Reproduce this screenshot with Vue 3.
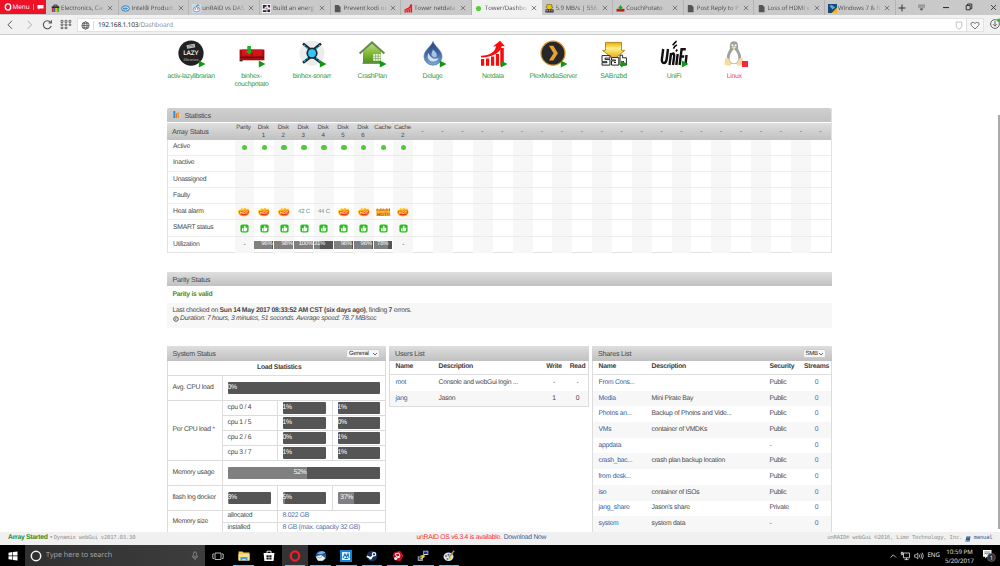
<script setup>
const tabs = [
  { icon: 'bag', text: 'Electronics, Car' },
  { icon: 'intel', text: 'Intel® Product' },
  { icon: 'reddit', text: 'unRAID vs DAS' },
  { icon: 'maze', text: 'Build an energ' },
  { icon: 'doc', text: 'Prevent kodi on' },
  { icon: 'bars', text: 'Tower netdata' },
  { icon: 'dot', text: 'Tower/Dashbo', active: true },
  { icon: 'sab', text: '5.9 MB/s | 556' },
  { icon: 'couch', text: 'CouchPotato' },
  { icon: 'doc', text: 'Post Reply to P' },
  { icon: 'doc', text: 'Loss of HDMI v' },
  { icon: 'win', text: 'Windows 7 & h' },
]

const apps = [
  { id: 'lazy', lines: ['activ-lazylibrarian'] },
  { id: 'couch', lines: ['binhex-', 'couchpotato'] },
  { id: 'sonarr', lines: ['binhex-sonarr'] },
  { id: 'crash', lines: ['CrashPlan'] },
  { id: 'deluge', lines: ['Deluge'] },
  { id: 'netdata', lines: ['Netdata'] },
  { id: 'plex', lines: ['PlexMediaServer'] },
  { id: 'sab', lines: ['SABnzbd'] },
  { id: 'unifi', lines: ['UniFi'] },
  { id: 'linux', lines: ['Linux'], stopped: true },
]

const disks = ['Parity', 'Disk\n1', 'Disk\n2', 'Disk\n3', 'Disk\n4', 'Disk\n5', 'Disk\n6', 'Cache', 'Cache\n2']
const rows = ['Active', 'Inactive', 'Unassigned', 'Faulty', 'Heat alarm', 'SMART status', 'Utilization']
const heat = ['hot', 'hot', 'hot', '42 C', '44 C', 'hot', 'hot', 'max', 'hot']
const usage = [null, 96, 98, 100, 31, 96, 96, 78, null]

const cpus = [
  ['cpu 0 / 4', 1, 1],
  ['cpu 1 / 5', 1, 0],
  ['cpu 2 / 6', 0, 1],
  ['cpu 3 / 7', 1, 1],
]

const users = [
  ['root', 'Console and webGui login ...', '-', '-'],
  ['jang', 'Jason', '1', '0'],
]

const shares = [
  ['From Cons...', '', 'Public'],
  ['Media', 'Mini Pirate Bay', 'Public'],
  ['Photos an...', 'Backup of Photos and Vide...', 'Public'],
  ['VMs', 'container of VMDKs', 'Public'],
  ['appdata', '', '-'],
  ['crash_bac...', 'crash plan backup location', 'Public'],
  ['from desk...', '', 'Public'],
  ['iso', 'container of ISOs', 'Public'],
  ['jang_share', "Jason's share", 'Private'],
  ['system', 'system data', '-'],
]

const tasks = ['view', 'folder', 'store', 'opera', 'bird', 'control', 'steam', 'red', 'putty', 'paint']
</script>

<template>
  <div class="screen">
    <header class="tabstrip">
      <div class="menu">
        <svg class="menu-o" viewBox="0 0 8 8"><ellipse cx="4" cy="4" rx="2.7" ry="3.1" fill="none" stroke="#fff" stroke-width="1.4" /></svg>
        <span>Menu</span><i></i>
        <svg class="menu-flag" viewBox="0 0 7 7"><path d="M.5 1h6v3.6H2.6L1.6 6V4.6H.5z" fill="#fff" /></svg>
      </div>
      <div v-for="(t, i) in tabs" :key="i" class="tab" :class="{ active: t.active }">
        <svg class="fav" viewBox="0 0 10 10">
          <g v-if="t.icon === 'bag'">
            <path d="M3.2 3V1.2h3.6V3" fill="none" stroke="#222" /><path d="M.8 2.6h8.4v2H.8z" fill="#222" />
            <path d="M1 4.3h2v4.5H1z" fill="#d22" /><path d="M3 4.3h2v4.5H3z" fill="#26c" /><path d="M5 4.3h2v4.5H5z" fill="#eb0" /><path d="M7 4.3h2v4.5H7z" fill="#3a3" />
          </g>
          <g v-else-if="t.icon === 'intel'">
            <ellipse cx="5" cy="5" rx="4.4" ry="3" fill="#cfe3f3" stroke="#2b7fc4" stroke-width="1.1" /><path d="M2 5.2h5.6M3.4 3.8v2.4M5.6 3.6v2.8" stroke="#2b7fc4" stroke-width="1" />
          </g>
          <g v-else-if="t.icon === 'reddit'">
            <path d="M0 0h10v10H0z" fill="#c5dcf0" /><ellipse cx="5" cy="6" rx="3.6" ry="2.7" fill="#fff" stroke="#667" stroke-width=".7" />
            <circle cx="3.6" cy="5.5" r=".9" fill="#e43" /><circle cx="6.4" cy="5.5" r=".9" fill="#e43" /><path d="M5 3.2 6 1l2 .5" fill="none" stroke="#345" stroke-width=".7" />
          </g>
          <g v-else-if="t.icon === 'maze'">
            <path d="M0 0h10v10H0z" fill="#f2f2f2" /><path d="M1 1h4v2H3v2H1zM6 1h3v3H7.500zM1 7h4v2H1zM6 6h3v3H6z" fill="#3a2036" /><path d="M4 4h2v2H4z" fill="#a7a" />
          </g>
          <path v-else-if="t.icon === 'doc'" d="M2 1h4l2.4 2.3V9.3H2z" fill="#555" />
          <path v-else-if="t.icon === 'bars'" d="M.5 7h1.6v2.4H.5zM2.7 6h1.6v3.4H2.7zM4.9 5h1.6v4.4H4.9zM7.2 3h1.8v6.4H7.2zM.5 5.8C4 5 6 4 6.8 1.8L6 1.2 9 .4v2.7L8 2.5C6.5 5 4 6 .5 6.5z" fill="#f00c14" />
          <circle v-else-if="t.icon === 'dot'" cx="5" cy="5" r="2.9" fill="#4cd530" />
          <g v-else-if="t.icon === 'sab'">
            <path d="M2 .6h5.6v3h1.4L5 7 1 3.6h1z" fill="#f5c400" stroke="#6b5300" stroke-width=".6" /><path d="M.5 6h9v3.4h-9z" fill="#222" /><path d="M1.4 7.6h1.8M4.2 7.6H6M7 7.6h1.5" stroke="#eee" stroke-width="1" />
          </g>
          <g v-else-if="t.icon === 'couch'">
            <path d="M.6 5.4h8.8v3H.6z" fill="#c4161c" /><path d="M2.2 4.6 5 1l2.8 3.6H6.2v2H3.8v-2z" fill="#17a81b" />
          </g>
          <g v-else>
            <path d="M0 0h10v10H0z" fill="#164a78" /><path d="M1.5 2 4 1l4 3-3 2z" fill="#6aa5cf" /><path d="M4 10 10 4v6z" fill="#e8b52c" />
          </g>
        </svg>
        <span class="tab-text">{{ t.text }}</span>
        <svg class="x" viewBox="0 0 6 6"><path d="M.8.8l4.4 4.4M5.2.8.8 5.2" stroke="#666" stroke-width=".8" /></svg>
      </div>
      <svg class="winctl" viewBox="0 0 104 15" width="104" height="15">
        <path d="M6 4.6v6.8M2.6 8h6.8" stroke="#333" stroke-width="1" />
        <path d="M22 5.2h7M22 7h7M24 8.8h3l-1.5 1.6z" stroke="#666" stroke-width=".8" fill="#666" />
        <path d="M47 7.6h6" stroke="#222" stroke-width="1" />
        <path d="M70.2 5.4h4v4.400h-4zM71.600 5.200V4h4.200v4.600h-1.400" fill="none" stroke="#222" stroke-width=".9" />
        <path d="M95 5l5 5M100 5l-5 5" stroke="#222" stroke-width=".8" />
      </svg>
    </header>

    <div class="toolbar">
      <svg class="nav" viewBox="0 0 77 19" width="77" height="19">
        <path d="M12 5.800 8 9.800l4 4" fill="none" stroke="#555" stroke-width="1" />
        <path d="M27.600 5.800l4 4-4 4" fill="none" stroke="#aaa" stroke-width="1" />
        <path d="M50.600 7.400a4 4 0 1 0 .6 3.400M51.400 5.200v2.800h-2.800" fill="none" stroke="#555" stroke-width="1.100" />
        <g fill="none" stroke="#555" stroke-width=".8"><path d="M61 5.400h2v2h-2zM65 5.400h2v2h-2zM69 5.400h1.800v2H69zM61 9h2v1.400h-2zM65 9h2v1.400h-2zM69 9h1.800v1.400H69zM61 12.200h2v1.400h-2zM65 12.200h2v1.400h-2z" /></g>
      </svg>
      <div class="address">
        <svg viewBox="0 0 9 9" width="9" height="9"><g fill="none" stroke="#555" stroke-width=".8"><circle cx="4.500" cy="4.500" r="3.600" /><ellipse cx="4.500" cy="4.500" rx="1.600" ry="3.600" /><path d="M1 4.500h7M1.500 2.700h6M1.500 6.300h6" /></g></svg>
        <i></i>
        <span class="url"><b>192.168.1.103</b>/Dashboard</span>
        <svg class="shield" viewBox="0 0 8 9" width="8" height="9"><path d="M1.200 1h5.600v4.200Q6.800 7 4 8.200 1.200 7 1.200 5.200z" fill="none" stroke="#bbb" stroke-width=".9" /></svg>
        <div class="heart"><svg viewBox="0 0 10 9" width="10" height="9"><path d="M5 8 1.400 4.400Q.4 3 1.400 1.800 3.200.4 5 2.400 6.800.4 8.600 1.800q1 1.200 0 2.600z" fill="none" stroke="#666" stroke-width=".9" /></svg></div>
      </div>
      <svg class="dl" viewBox="0 0 12 12" width="12" height="12"><circle cx="6" cy="6" r="4.400" fill="none" stroke="#555" stroke-width=".9" /><path d="M6 3v5M4 6.200l2 2 2-2" fill="none" stroke="#555" stroke-width=".9" /><circle cx="9.800" cy="2.200" r="1.800" fill="#25c12c" /></svg>
    </div>

    <main class="page">
      <section class="apps">
        <div v-for="a in apps" :key="a.id" class="app" :class="{ stopped: a.stopped }">
          <svg class="app-icon" viewBox="0 0 28 27">
            <g v-if="a.id === 'lazy'">
              <circle cx="14" cy="13.200" r="12.600" fill="#202124" /><path d="M9.500 5.200l8-1.400.8 3.400-8 1.600z" fill="#d9d3c2" /><path d="M10.400 6l6.600-1M10.600 7.300l6.600-1" stroke="#444" stroke-width=".5" />
              <text x="14" y="15.400" text-anchor="middle" font-size="6.200" font-weight="bold" fill="#f2eee2" font-family="Lato">LAZY</text>
              <text x="14" y="20.600" text-anchor="middle" font-size="4.200" font-style="italic" fill="#c9c4b8" font-family="Liberation Serif">librarian</text>
            </g>
            <g v-else-if="a.id === 'couch'">
              <path d="M1.600 9.500h24.800v10.800H1.600z" fill="#a80f12" /><path d="M4 9.600h20v6.200H4z" fill="#d21519" /><path d="M2 17.400h24" stroke="#6e080a" stroke-width="1.200" /><path d="M14 10v6" stroke="#7c090c" stroke-width=".7" /><path d="M1.600 20h3v1.400h-3z" fill="#333" />
              <path d="M9.300 6h3.600v5h2.200l-4 3.600-4-3.600h2.200z" fill="#13b322" />
            </g>
            <g v-else-if="a.id === 'sonarr'">
              <circle cx="14" cy="13.200" r="12.500" fill="#ececec" /><path d="M5 3.600 13 10h2l8-6.400M5 22.800 13 16.600h2l8 6.200" fill="none" stroke="#1d2a33" stroke-width="2.600" />
              <path d="M6 5l4.500 4.500M22 5l-4.500 4.500M6 21.500l4.500-4.500M22 21.500 17.500 17" stroke="#32b8ea" stroke-width="1.200" stroke-dasharray="2 1.500" />
              <circle cx="14" cy="13.200" r="5.600" fill="#1d2a33" /><circle cx="14" cy="13.200" r="3.900" fill="#35c5f4" />
            </g>
            <g v-else-if="a.id === 'crash'">
              <defs><linearGradient id="house" x2="0" y2="1"><stop offset="0" stop-color="#b9dc84" /><stop offset=".55" stop-color="#7cb52f" /><stop offset="1" stop-color="#4d8f20" /></linearGradient></defs>
              <path d="M5 11.500 14 3.500l9 8v11.700H5z" fill="url(#house)" /><path d="M1.600 13.400 14 2.400l12.400 11" fill="none" stroke="#628f4a" stroke-width="2" /><path d="M4.500 23.300h19.500" stroke="#7c8877" stroke-width="1.200" />
              <path d="M15.200 14h7.400v6.800h-7.400z" fill="#eef6e4" /><path d="M17.600 14v6.800M20.200 14v6.800M15.200 16.200h7.400M15.200 18.500h7.400" stroke="#79a85a" stroke-width=".7" />
            </g>
            <g v-else-if="a.id === 'deluge'">
              <defs><linearGradient id="drop" x2="0" y2="1"><stop offset="0" stop-color="#2d4470" /><stop offset=".5" stop-color="#3f68a4" /><stop offset="1" stop-color="#7fa9d4" /></linearGradient></defs>
              <path d="M14 1.500C15.500 6 23 10.500 23 16.600a9 8.600 0 0 1-18 0C5 10.500 12.500 6 14 1.500z" fill="url(#drop)" stroke="#5a76a4" stroke-width=".7" />
              <path d="M9.500 13c-2 4 0 8.500 4.500 8.500 3 0 5-1.500 5.500-3.500-4 2-8.500 0-10-5z" fill="#d3e2f2" /><path d="M14 9.500c3 3 4.500 4.500 3.500 7-1.500 1.500-4.500.5-5-2 0-2 1-3 1.500-5z" fill="#a9c4e2" />
            </g>
            <path v-else-if="a.id === 'netdata'" d="M2 19h3.200v6.800H2zM7 18.500h3.200v7.300H7zM12 16.500h3.200v9.300H12zM16.900 14h3.100v11.800h-3.100zM21.300 8h3.500v17.800h-3.500zM2 15.800C11 15.500 16 12 17 6.200l-3 .3L21 .8l5 5.500-3.200-.2C21 13 14 17.400 2 17.500z" fill="#f80c0c" />
            <g v-else-if="a.id === 'plex'">
              <circle cx="14" cy="13.200" r="12" fill="#26282b" stroke="#d79524" stroke-width="1.200" /><path d="M10 5.800h4.300l4.600 7.400-4.600 7.400H10l4.500-7.400z" fill="#e8a22c" />
            </g>
            <g v-else-if="a.id === 'sab'">
              <defs><linearGradient id="arrow" x2="0" y2="1"><stop offset="0" stop-color="#e9a900" /><stop offset=".35" stop-color="#fff08a" /><stop offset="1" stop-color="#e0a000" /></linearGradient></defs>
              <path d="M5.500 2.400h16v8h3.200L14 19.500 2.600 10.400h2.900z" fill="url(#arrow)" stroke="#a57600" stroke-width=".8" />
              <path d="M2 15.600h8v2.500H5v1.500h5v5.500H2v-2.400h5v-1H2zM11.500 17.600h7.300v7.500h-7.300v-4.200h4v-.9h-4zM20 15.200h2.600v2.600h3.800v7.300H20z" fill="#fff" stroke="#252525" stroke-width="1" /><path d="M14 22.500h2M22.400 21.500h1.600" stroke="#252525" stroke-width="1" />
            </g>
            <g v-else-if="a.id === 'unifi'" fill="none" stroke="#111" stroke-width="2.400">
              <path d="M3.200 9 1.900 19q-.3 4 2 4 2.300 0 2.800-4L8 9M9.500 25l1.600-12M10.900 15q3.500-3.500 3.300 1L13 25M16.300 25l1.400-11M19.600 25l2-15.800h4.200M20.800 16.500h3.400M25.500 25l1-10" /><path d="M12.700 5.300q3-4 4-4M13.400 8.600q1.500-3 3.600-3.600M16 11.500l1.200-2" stroke-width="1.700" />
            </g>
            <g v-else opacity=".5">
              <path d="M14 1.200c-4 0-4.400 3.500-4 7-1 3-3.600 6-3 11 .5 3 4 4.800 7 4.800s6.500-1.800 7-4.800c.6-5-2-8-3-11 .4-3.500 0-7-4-7z" fill="#444" /><path d="M14 9c-2.700 2.200-4.400 6-4.400 9.500s2.400 5 4.400 5 4.400-1.500 4.400-5S16.700 11.200 14 9z" fill="#fff" />
              <path d="M11.500 7.300 14 6.200l2.500 1.100L14 9.300zM5 18.500l3-.5 3.500 6-1.500 2-5.500-1.300zM23 18.500l-3-.5-3.500 6 1.500 2 5.500-1.300z" fill="#f1ba3e" /><circle cx="12.400" cy="5.300" r="1" fill="#fff" /><circle cx="15.600" cy="5.300" r="1" fill="#fff" />
            </g>
          </svg>
          <svg class="state" viewBox="0 0 8 8"><rect v-if="a.stopped" x="1" y="1" width="6" height="6" fill="#f5273e" /><path v-else d="M.8.6 7.500 4 .8 7.400z" fill="#0c9a10" /></svg>
          <span v-for="l in a.lines" :key="l">{{ l }}</span>
        </div>
      </section>

      <section class="stats">
        <h2 class="flat"><svg viewBox="0 0 8 9" width="8" height="9"><path d="M.4 1h1.900v7H.4z" fill="#1f8fe0" /><path d="M2.900 3h1.400v5H2.900z" fill="#f4762a" /><path d="M4.600 2h1.300l.6 6H5z" fill="#f79a2e" /><path d="M6.500 4h1.200v4H6.500z" fill="#cfd8de" /></svg>Statistics</h2>
        <div class="srow shead">
          <div class="lab">Array Status</div>
          <div v-for="n in 30" :key="n" class="cell" :class="{ none: n > 9 }">{{ disks[n - 1] || '-' }}</div>
        </div>
        <div v-for="(r, ri) in rows" :key="r" class="srow">
          <div class="lab">{{ r }}</div>
          <div v-for="n in 30" :key="n" class="cell">
            <template v-if="n < 10">
              <i v-if="ri === 0" class="led"></i>
              <template v-else-if="ri === 4">
                <svg v-if="heat[n - 1] === 'hot'" viewBox="0 0 12 10" width="12" height="10"><path d="M.5 3l2-.6 1-1.300 1.700.8L7 .8l1.500 1.100 2-.3.400 1.600.9 1.800-1 1.500-1 2-4 1.100-3.500-.8-1.500-1.800L0 5.500z" fill="#ffc413" /><path d="M1 4l10-.5-.5 3.500q-4.500 3-9 0z" fill="#ee3a0c" /><text x="6" y="7.100" text-anchor="middle" font-size="4" font-weight="bold" fill="#fff3a8">HOT</text></svg>
                <svg v-else-if="heat[n - 1] === 'max'" viewBox="0 0 15 10" width="15" height="10"><path d="M.3 3.500 1 .8l2 1.700L4.500 1 6 2.600 7.300 1l1.500 1.500 1.500-1.600 1.400 1.500 2-1.300.8 8H.3z" fill="#f8b73c" /><path d="M1 2v2M3 2.500v1.500M5 1.500V4M7 2v2M9 2.500V4M11 1.500V4M13.400 1.500V4" stroke="#c14618" stroke-width=".8" /><text x="7.400" y="8.700" text-anchor="middle" font-size="4.600" font-weight="bold" fill="#b55010">HOT!!</text></svg>
                <span v-else class="temp">{{ heat[n - 1] }}</span>
              </template>
              <svg v-else-if="ri === 5" viewBox="0 0 9 9" width="9" height="9"><rect x=".4" y=".4" width="8.200" height="8.200" rx="1.800" fill="#2cc01f" /><path d="M2 4.200h1.200v3H2zM3.600 4.200 4.700 1.600q1 0 .7 2.200h1.800q.3 2-.7 3.400H3.600z" fill="#fff" /></svg>
              <template v-else-if="ri === 6">
                <div v-if="usage[n - 1] !== null" class="meter mini" :style="{ '--p': usage[n - 1] + '%' }"><span>{{ usage[n - 1] }}%</span></div>
                <template v-else>-</template>
              </template>
            </template>
          </div>
        </div>
      </section>

      <section class="parity">
        <h2>Parity Status</h2>
        <p class="valid">Parity is valid</p>
        <div class="checked">
          <p>Last checked on <b>Sun 14 May 2017 08:33:52 AM CST (six days ago)</b>, finding <b>7</b> errors.</p>
          <p><svg viewBox="0 0 6 6" width="6" height="6"><circle cx="3" cy="3" r="2.300" fill="none" stroke="#333" stroke-width=".8" /><path d="M3 1.500V3.300H2" fill="none" stroke="#333" stroke-width=".5" /></svg><em> Duration: 7 hours, 3 minutes, 51 seconds. Average speed: 78.7 MB/sec</em></p>
        </div>
      </section>

      <section class="panels">
        <div class="panel system">
          <h2>System Status<span class="select gen">General<svg viewBox="0 0 6 4" width="6" height="4"><path d="M1 1l2 2 2-2" fill="none" stroke="#444" stroke-width=".8" /></svg></span></h2>
          <div class="sgrid">
            <div class="load-title">Load Statistics</div>
            <div class="g">Avg. CPU load</div><div class="g w3"><div class="meter" :style="{ '--p': '0%' }"><span>0%</span></div></div>
            <div class="g percpu">Per CPU load&nbsp;<em>*</em></div>
            <template v-for="c in cpus" :key="c[0]">
              <div class="g">{{ c[0] }}</div>
              <div v-for="k in 2" :key="k" class="g"><div class="meter" :style="{ '--p': c[k] + '%' }"><span>{{ c[k] }}%</span></div></div>
            </template>
            <div class="g">Memory usage</div><div class="g w3"><div class="meter" :style="{ '--p': '52%' }"><span>52%</span></div></div>
            <div class="g">flash log docker</div>
            <div v-for="p in [3, 5, 37]" :key="p" class="g"><div class="meter" :style="{ '--p': p + '%' }"><span>{{ p }}%</span></div></div>
            <div class="g memsize">Memory size</div>
            <div class="g">allocated</div><div class="g w2 blue">8.022 GB</div>
            <div class="g">installed</div><div class="g w2 blue">8 GB (max. capacity 32 GB)</div>
          </div>
        </div>

        <div class="panel users">
          <h2>Users List</h2>
          <div class="trow thead"><b>Name</b><b>Description</b><b class="c">Write</b><b class="c">Read</b></div>
          <div v-for="u in users" :key="u[0]" class="trow"><a>{{ u[0] }}</a><span>{{ u[1] }}</span><span class="c">{{ u[2] }}</span><span class="c">{{ u[3] }}</span></div>
        </div>

        <div class="panel shares">
          <h2>Shares List<span class="select">SMB<svg viewBox="0 0 6 4" width="6" height="4"><path d="M1 1l2 2 2-2" fill="none" stroke="#444" stroke-width=".8" /></svg></span></h2>
          <div class="trow thead"><b>Name</b><b>Description</b><b>Security</b><b class="c">Streams</b></div>
          <div v-for="s in shares" :key="s[0]" class="trow"><a>{{ s[0] }}</a><span>{{ s[1] }}</span><span>{{ s[2] }}</span><span class="c num">0</span></div>
        </div>
      </section>
      <i class="scroll"></i>
    </main>

    <footer class="status">
      <div class="left"><b>Array Started</b><span class="mono">•<s></s>Dynamix webGui v2017.03.30</span></div>
      <div class="mid"><span>unRAID OS v6.3.4 is available.</span><a>Download Now</a></div>
      <div class="right mono">unRAID® webGui ©2016, Lime Technology, Inc.<svg viewBox="0 0 6 6" width="6" height="6"><path d="M1.500.5h4L4.600 5.400H.4z" fill="#22598f" /><path d="M2.200 1.900h2.200M.8 4.500h3.500" stroke="#fff" stroke-width=".4" /></svg><a>manual</a></div>
    </footer>

    <nav class="taskbar">
      <div class="start"><svg viewBox="0 0 10 10" width="10" height="10"><path d="M.5 1.700 4.400 1.100v3.500H.5zM5 1 9.500.4v4.200H5zM.5 5.200h3.900v3.600L.5 8.200zM5 5.200h4.500v4.300L5 8.900z" fill="#fff" /></svg></div>
      <div class="search">
        <svg viewBox="0 0 12 12" width="12" height="12"><circle cx="6" cy="6" r="4.700" fill="none" stroke="#f2f2f2" stroke-width="1.500" /></svg>
        <span>Type here to search</span>
        <svg class="mic" viewBox="0 0 8 10" width="8" height="10"><rect x="2.600" y=".8" width="2.800" height="5.200" rx="1.400" fill="none" stroke="#999" stroke-width=".7" /><path d="M1.300 4.500Q1.300 7.300 4 7.300T6.700 4.500M4 7.300v1.900" fill="none" stroke="#999" stroke-width=".7" /></svg>
      </div>
      <div v-for="k in tasks" :key="k" class="task" :class="[k, { open: k !== 'view' && k !== 'store' }]">
        <svg viewBox="0 0 12 12" width="12" height="12">
          <path v-if="k === 'view'" d="M3 3h6v6.500H3zM2 4H.8v4.500H2M10 4h1.200v4.500H10" fill="none" stroke="#ddd" stroke-width=".8" />
          <g v-else-if="k === 'folder'"><path d="M.5 1.500h4l1 1h6v8H.5z" fill="#f5c84f" /><path d="M.5 4h11v6.500H.5z" fill="#fbe08a" /><path d="M2.500 7h7v3.800H7.600V9H4.400v1.800H2.500z" fill="#3fa3e0" /></g>
          <g v-else-if="k === 'store'"><path d="M4 3V1.200h4V3" fill="none" stroke="#fff" stroke-width=".9" /><path d="M.6 3h10.800l-.8 8H1.400z" fill="#fff" /><path d="M3.500 5.200h2.200v1.900H3.500zM6.300 5.200h2.200v1.900H6.300zM3.500 7.600h2.200v1.900H3.500zM6.300 7.600h2.200v1.900H6.300z" fill="#111" /></g>
          <ellipse v-else-if="k === 'opera'" cx="6" cy="6" rx="4.200" ry="4.700" fill="none" stroke="#f01d2d" stroke-width="2.300" />
          <g v-else-if="k === 'bird'"><circle cx="6" cy="6" r="5.200" fill="#245f9f" /><path d="M2 4q4-4.500 8.500-1.500L7 4z" fill="#6fb2e8" /><path d="M.7 6.500 6 5l4.500 3-3 2.700H3z" fill="#eee" /><path d="M.7 6.500 5 8l2-1.500" stroke="#789" stroke-width=".6" fill="none" /></g>
          <g v-else-if="k === 'control'"><path d="M0 0h12v12H0z" fill="#1583d6" /><path d="M2 2h8v8H2z" fill="#dff0fc" /><path d="M3 8 5 4l1.500 3L8 3.500 9 8M4.500 8.500h3.500" fill="none" stroke="#1477c2" stroke-width="1.100" /></g>
          <g v-else-if="k === 'steam'"><circle cx="6" cy="6" r="5.300" fill="#15315a" /><circle cx="8" cy="4.300" r="1.700" fill="none" stroke="#fff" stroke-width="1.100" /><path d="M.8 6.200 4.500 8 7 5.800" stroke="#fff" stroke-width="1.700" fill="none" /><circle cx="4.500" cy="8.200" r="1.400" fill="#fff" /></g>
          <g v-else-if="k === 'red'"><path d="M2 2.500 8 .8l3.500 5-3 5.400-5.500-.7L.6 6z" fill="#b81425" /><path d="M3 4l4-1 1 3-3 1zM5 8l3-1" stroke="#fff" stroke-width=".9" fill="none" /><circle cx="3.700" cy="8.500" r="1.500" fill="#eee" /></g>
          <g v-else-if="k === 'putty'"><path d="M6.300.8h5v4.300h-5zM.8 6.500h5v4.300h-5z" fill="#c9ccd2" /><path d="M7 1.500h3.600v2.600H7zM1.500 7.200h3.600v2.500H1.500z" fill="#1632b8" /><path d="M8 4.800 4.500 6l2.500.8L3.500 9" fill="none" stroke="#f5dc1e" stroke-width="1.200" /></g>
          <g v-else><ellipse cx="5.500" cy="6.800" rx="5" ry="4.200" fill="#cfe4ef" /><circle cx="3" cy="6" r="1" fill="#d43" /><circle cx="4.500" cy="9" r="1" fill="#3a3" /><circle cx="5.500" cy="4.800" r="1" fill="#36c" /><circle cx="7.500" cy="8.500" r="1" fill="#e9b421" /><path d="M6 7.500 11 .8" stroke="#c98738" stroke-width="1.500" /></g>
        </svg>
      </div>
      <div class="tray">
        <svg viewBox="0 0 36 12" width="36" height="12"><g fill="none" stroke="#e5e5e5" stroke-width=".8"><path d="M1.600 7.500 4.300 4.800 7 7.500" /><path d="M14.500 3h6v4.800h-6zM15.500 9.600h4M17.500 7.800v1.800M13 2.300v3M12.300 2.300h1.700v2H12.300z" /><path d="M25.600 4.800h1.300l1.900-1.700v5.800l-1.900-1.700h-1.300zM30.200 4.500q1 1.500 0 3M31.800 3.500q1.700 2.500 0 5M33.200 2.700q2.300 3.300 0 6.600" stroke-width=".7" /></g></svg>
        <span class="eng">ENG</span>
        <div class="clock"><span>10:59 PM</span><span>5/20/2017</span></div>
        <svg class="note" viewBox="0 0 14 13" width="14" height="13"><path d="M1 1h8.500v6.800H5L3.200 9.500V7.800H1z" fill="#fff" /><path d="M2.300 3h6M2.300 4.700h6" stroke="#333" stroke-width=".6" /><circle cx="9.400" cy="8.500" r="4" fill="#333" stroke="#777" stroke-width=".6" /><text x="9.400" y="10.600" text-anchor="middle" font-size="5.800" fill="#fff" font-family="Open Sans">1</text></svg>
      </div>
    </nav>
  </div>
</template>

<style>
html, body { margin: 0; background: #fff; overflow: hidden; }
</style>

<style scoped>
* { box-sizing: border-box; }
.screen { width: 1000px; height: 566px; display: flex; flex-direction: column; overflow: hidden; background: #fff; color: #4a4a4a; font: 6.8px/1 "Liberation Sans", Arial, sans-serif; letter-spacing: -.27px; text-rendering: geometricPrecision; white-space: nowrap; }
svg { flex: none; display: block; letter-spacing: 0; }
h2, p { margin: 0; }

.tabstrip { flex: none; height: 15px; display: flex; background: #c9c9c9; font-family: "Open Sans", sans-serif; letter-spacing: 0; color: #4b4b4b; }
.menu { width: 46px; height: 14px; margin-right: 2px; background: #ed1226; color: #fff; display: flex; align-items: center; padding-left: 3.500px; font-size: 6.400px; flex: none; }
.menu-o { width: 8px; height: 8px; margin-right: 1px; }
.menu i { width: 1px; height: 6px; background: #f58a93; margin: 0 3px 0 3.500px; }
.menu-flag { width: 7px; height: 7px; }
.tab { width: 70.650px; flex: none; display: flex; align-items: center; padding: 1px 4.500px 0 2.500px; border-right: 1px solid #b4b4b4; font-size: 6.100px; }
.tab.active { background: #f1f1f1; border-color: #f1f1f1; }
.fav { width: 9px; height: 9px; margin-right: 1.500px; }
.tab-text { flex: 1; min-width: 0; line-height: 12px; margin-right: 4px; -webkit-mask-image: linear-gradient(90deg, #000 75%, #0003); mask-image: linear-gradient(90deg, #000 75%, #0003); }
.x { width: 6px; height: 6px; }
.winctl { flex: none; }

.toolbar { flex: none; height: 20px; background: #f1f1f1; border-bottom: 1px solid #ccc; display: flex; align-items: flex-start; font-family: "Open Sans", sans-serif; letter-spacing: 0; }
.address { flex: none; width: 907px; height: 14px; margin-top: 3px; background: #fff; border: 1px solid #e2e2e2; display: flex; align-items: center; padding-left: 3px; }
.address > i { width: 1px; height: 9px; background: #ddd; margin: 0 4px 0 3px; }
.url { font-size: 6.600px; letter-spacing: -.2px; color: #888; }
.url b { font-weight: 400; color: #222; }
.shield { margin-left: auto; }
.heart { margin-left: 3px; width: 17px; height: 12px; background: #f6f6f6; border-left: 1px solid #ddd; display: grid; place-items: center; }
.dl { margin: 3px 0 0 5px; }

.page { flex: 1; min-height: 0; position: relative; overflow: hidden; padding: 5px 0 0 166.500px; }
.scroll { position: absolute; right: 0; top: 80px; width: 2px; height: 414px; background: #aaa; }

.apps { display: flex; margin-left: -5.500px; height: 67.500px; }
.app { position: relative; width: 60.350px; flex: none; display: flex; flex-direction: column; align-items: center; color: #2f9a3a; }
.app.stopped { color: #f0444e; }
.app-icon { width: 28px; height: 27px; margin-bottom: 5.500px; }
.app span { line-height: 8.400px; }
.state { position: absolute; left: 37px; top: 20px; width: 8px; height: 8px; }

h2 { height: 14.500px; display: flex; align-items: center; padding: 1px 0 0 6px; background: linear-gradient(#dedede, #c1c1c1); font-size: 7.200px; letter-spacing: -.25px; font-weight: 400; color: #4a4a4a; }
h2.flat { background: linear-gradient(#cfcfcf, #c3c3c3); height: 14.500px; margin-bottom: 1px; border-radius: 2px 2px 0 0; }
h2.flat svg { margin: -2px 4px 0 0; }

.stats { width: 665px; border: 1px solid #e2e2e2; border-width: 0 1px 1px 0; height: 145.500px; }
.srow { display: grid; grid-template-columns: 67px repeat(30, minmax(0, 1fr)); height: 16.200px; border-bottom: 1px solid #ececec; border-left: 1px solid #e2e2e2; }
.srow:last-child { border-bottom: 0; }
.lab { padding: 1px 0 0 5.500px; display: flex; align-items: center; }
.cell { display: flex; align-items: center; justify-content: center; min-width: 0; padding-top: .5px; }
.srow .cell:nth-child(even) { background: #f7f7f7; }
.srow.shead { height: 16.500px; background: linear-gradient(#dedede, #c1c1c1); border: 0; }
.shead .lab { font-size: 7.200px; letter-spacing: -.25px; }
.srow.shead .cell { background: none; white-space: pre; text-align: center; font-size: 6.200px; letter-spacing: -.2px; line-height: 8px; align-items: flex-start; }
.srow.shead .none { align-items: center; }
.led { width: 5.500px; height: 5.500px; border-radius: 50%; background: #4fca38; }
.temp { font-size: 6px; letter-spacing: -.2px; color: #6f8f6f; }

.meter { flex: 1; height: 12px; border-radius: 1px; background: linear-gradient(90deg, #808080 var(--p), #555 var(--p)); color: #fff; display: flex; align-items: center; }
.meter span { width: var(--p); min-width: max-content; text-align: right; }
.meter.mini { height: 8.500px; margin-right: 1px; font-size: 5.900px; letter-spacing: -.2px; border-radius: 0; }

.parity { margin-top: 18.500px; width: 665px; height: 74px; }
.valid { height: 17px; line-height: 17px; padding-left: 6px; color: #4f8a10; font-weight: 700; }
.checked { height: 24.500px; padding: 3.500px 0 0 6px; background: #f7f7f7; }
.checked p { line-height: 8.900px; height: 8.900px; display: flex; white-space: pre; align-items: center; }
.checked svg { margin-top: -1px; }

.panels { display: flex; gap: 3px; align-items: flex-start; }
.panel { border: 1px solid #dcdcdc; border-top: 0; }
.panel h2 { margin: 0 -1px; height: 15px; padding-right: 6px; justify-content: space-between; }
.select { display: flex; align-items: center; justify-content: space-between; height: 9.500px; width: 23px; padding: 1px 1px 0 2px; background: #f6f6f6; border: .5px solid #ccc; border-radius: 2px; font-size: 6px; letter-spacing: -.25px; color: #222; }
.select.gen { width: 34px; }
.system { width: 219.500px; }
.sgrid { margin-left: -1px; display: grid; grid-template-columns: 55px 55px 55px 1fr; grid-template-rows: 14.500px 25px repeat(4, 15.050px) 25px 25px 12px 12px; }
.load-title { grid-column: span 4; font-weight: 700; display: grid; place-items: center; padding: 1px 0 0 7px; color: #3c3c3c; }
.g { border-top: 1px solid #dcdcdc; border-left: 1px solid #dcdcdc; padding: 0 5.500px 0 5px; display: flex; align-items: center; min-width: 0; }
.w3 { grid-column: span 3; }
.w2 { grid-column: span 2; }
.percpu { grid-row: span 4; }
.percpu em { color: #f0313c; font-style: normal; }
.memsize { grid-row: span 2; }
.blue { color: #5470a8; }

.trow { display: grid; height: 15.700px; align-items: center; padding: 1px 0 0 5.500px; }
.users { width: 200px; }
.shares { width: 239.500px; }
.users .trow { grid-template-columns: 43px 105px 21px 26px; }
.shares .trow { grid-template-columns: 53px 118px 34px 26px; }
.users .trow:nth-child(4), .shares .trow:nth-child(even):not(.thead) { background: #f7f7f7; }
.trow.thead { height: 14.500px; border-bottom: 1px solid #dcdcdc; color: #3c3c3c; }
.c { text-align: center; }
a { color: #34639f; }
.num { color: #5470a8; }

.status { flex: none; height: 13px; background: #f0f0f0; display: grid; grid-template-columns: 408.500px 1fr auto; align-items: center; padding: 0 7.500px 0 8px; }
.left, .mid, .right { display: flex; align-items: center; }
.left b { color: #2e8b1e; margin-right: 2px; }
.mono { font-family: "DejaVu Sans Mono", monospace; font-size: 5.600px; letter-spacing: -.23px; color: #909090; }
.left s { display: inline-block; width: 1px; }
.mid span { color: #f0313c; margin-right: 2px; }
.right svg { margin: 0 2.500px 0 3px; }

.taskbar { flex: none; height: 21px; background: #000; display: flex; align-items: stretch; font-family: "Open Sans", sans-serif; letter-spacing: 0; color: #eee; }
.start { width: 25px; display: grid; place-items: center; }
.search { width: 180px; background: linear-gradient(90deg, #303030, #3d3d3d); display: flex; align-items: center; padding-left: 4.500px; }
.search span { margin-left: 4.500px; font-size: 7.200px; color: #aaa; }
.mic { margin: 0 6px 0 auto; }
.task { width: 25.700px; display: grid; place-items: center; position: relative; }
.task.opera { background: #333; }
.task.open::after { content: ""; position: absolute; left: 2.500px; right: 2.500px; bottom: 0; height: 1px; background: #76b9ed; }
.tray { margin-left: auto; display: flex; align-items: center; padding-right: 4px; }
.eng { font-size: 6.200px; margin-left: 2px; }
.clock { width: 39px; display: flex; flex-direction: column; align-items: center; font-size: 6.100px; line-height: 9px; }
.note { margin-left: 3px; }
</style>
